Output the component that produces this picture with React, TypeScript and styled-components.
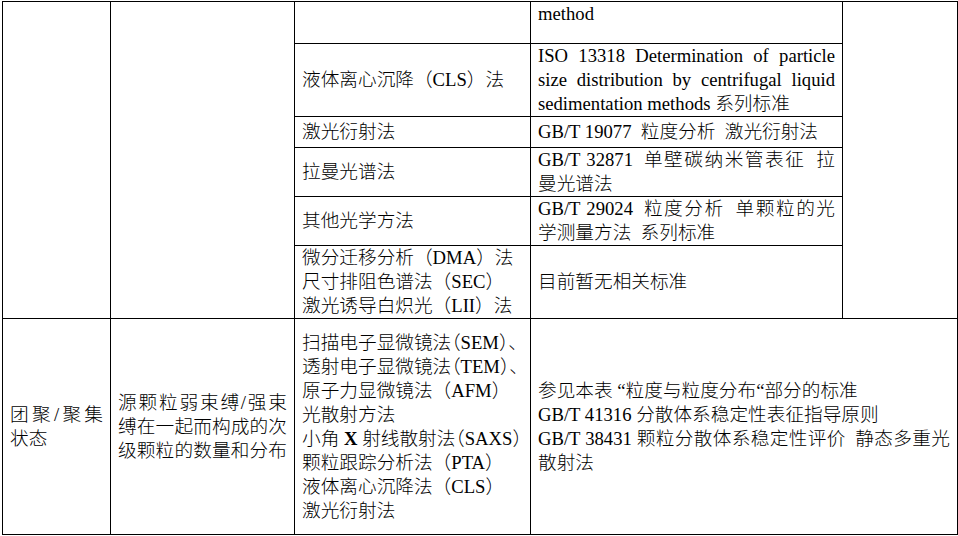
import React from 'react';
import styled, { createGlobalStyle } from 'styled-components';

const GlobalStyle = createGlobalStyle`
  html, body {
    margin: 0;
    padding: 0;
    background: #fff;
  }
  body {
    width: 958px;
    height: 536px;
    overflow: hidden;
  }
`;

const Sheet = styled.table`
  margin: 1px 0 0 2px;
  border-collapse: collapse;
  table-layout: fixed;
  width: 956px;
  font-family: "Liberation Serif", "Noto Sans CJK SC", serif;
  font-size: 18.67px;
  line-height: 24px;
  font-weight: 300;
  color: #000;
`;

const Col = styled.col<{ $w: number }>`
  width: ${p => p.$w}px;
`;

const Row = styled.tr<{ $h: number }>`
  height: ${p => p.$h}px;
`;

const Cell = styled.td<{ $top?: boolean }>`
  border: 1px solid #000;
  padding: 0 7px;
  vertical-align: ${p => (p.$top ? 'top' : 'middle')};
  text-align: left;
`;

const Line = styled.div<{ $justify?: boolean }>`
  white-space: ${p => (p.$justify ? 'normal' : 'nowrap')};
  text-align: ${p => (p.$justify ? 'justify' : 'left')};
  text-align-last: ${p => (p.$justify ? 'justify' : 'auto')};
`;

const Tight = styled.span`
  font-feature-settings: "halt" 1;
`;

const Strong = styled.b`
  font-weight: 700;
`;

const S = '\u2002';

export default function App() {
  return (
    <>
      <GlobalStyle />
      <Sheet>
        <colgroup>
          <Col $w={108} />
          <Col $w={184} />
          <Col $w={236} />
          <Col $w={312} />
          <Col $w={115} />
        </colgroup>
        <tbody>
          <Row $h={42}>
            <Cell rowSpan={6} />
            <Cell rowSpan={6} />
            <Cell />
            <Cell $top>
              <Line>method</Line>
            </Cell>
            <Cell rowSpan={6} />
          </Row>
          <Row $h={73}>
            <Cell>
              <Line>液体离心沉降（CLS）法</Line>
            </Cell>
            <Cell>
              <Line $justify>ISO 13318 Determination of particle</Line>
              <Line $justify>size distribution by centrifugal liquid</Line>
              <Line>sedimentation methods 系列标准</Line>
            </Cell>
          </Row>
          <Row $h={31}>
            <Cell>
              <Line>激光衍射法</Line>
            </Cell>
            <Cell>
              <Line>{`GB/T 19077${S}粒度分析${S}激光衍射法`}</Line>
            </Cell>
          </Row>
          <Row $h={49}>
            <Cell>
              <Line>拉曼光谱法</Line>
            </Cell>
            <Cell>
              <Line $justify>{`GB/T 32871${S}单壁碳纳米管表征${S}拉`}</Line>
              <Line>曼光谱法</Line>
            </Cell>
          </Row>
          <Row $h={49}>
            <Cell>
              <Line>其他光学方法</Line>
            </Cell>
            <Cell>
              <Line $justify>{`GB/T 29024${S}粒度分析${S}单颗粒的光`}</Line>
              <Line>{`学测量方法${S}系列标准`}</Line>
            </Cell>
          </Row>
          <Row $h={73}>
            <Cell>
              <Line>微分迁移分析（DMA）法</Line>
              <Line>尺寸排阻色谱法（SEC）</Line>
              <Line>激光诱导白炽光（LII）法</Line>
            </Cell>
            <Cell>
              <Line>目前暂无相关标准</Line>
            </Cell>
          </Row>
          <Row $h={216}>
            <Cell>
              <Line $justify>团聚/聚集</Line>
              <Line>状态</Line>
            </Cell>
            <Cell>
              <Line $justify>源颗粒弱束缚/强束</Line>
              <Line $justify>缚在一起而构成的次</Line>
              <Line $justify>级颗粒的数量和分布</Line>
            </Cell>
            <Cell>
              <Line>
                扫描电子显微镜法<Tight>（</Tight>SEM<Tight>）</Tight>、
              </Line>
              <Line>
                透射电子显微镜法<Tight>（</Tight>TEM<Tight>）</Tight>、
              </Line>
              <Line>原子力显微镜法（AFM）</Line>
              <Line>光散射方法</Line>
              <Line>
                小角<Strong> X </Strong>射线散射法<Tight>（</Tight>SAXS）
              </Line>
              <Line>颗粒跟踪分析法（PTA）</Line>
              <Line>液体离心沉降法（CLS）</Line>
              <Line>激光衍射法</Line>
            </Cell>
            <Cell colSpan={2}>
              <Line>参见本表 “粒度与粒度分布“部分的标准</Line>
              <Line>GB/T 41316 分散体系稳定性表征指导原则</Line>
              <Line $justify>GB/T 38431 颗粒分散体系稳定性评价{S}静态多重光</Line>
              <Line>散射法</Line>
            </Cell>
          </Row>
        </tbody>
      </Sheet>
    </>
  );
}
